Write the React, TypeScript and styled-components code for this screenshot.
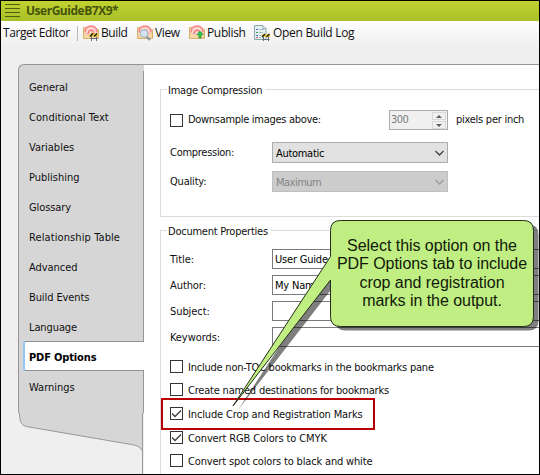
import React from 'react';
import styled, { createGlobalStyle, css } from 'styled-components';

const GlobalStyle = createGlobalStyle`
  *, *::before, *::after { box-sizing: border-box; }
  body { margin: 0; overflow: hidden; }
`;

const uiFont = css`
  font-family: 'DejaVu Sans Condensed', 'DejaVu Sans', sans-serif;
  font-stretch: condensed;
  font-size: 11px;
`;

const Frame = styled.main`
  position: relative;
  display: flex;
  flex-direction: column;
  width: 540px;
  height: 475px;
  overflow: hidden;
  border: 1px solid #000;
  background: #efefef;
  color: #101010;
  white-space: nowrap;
  ${uiFont}
`;

const TitleBar = styled.header`
  display: flex;
  align-items: center;
  flex: none;
  height: 20px;
  padding-left: 4px;
  background: linear-gradient(#c0d331, #a9bf27);
`;

const Title = styled.h1`
  margin: 0 0 0 6px;
  font: bold 12px/20px 'Open Sans', sans-serif;
  letter-spacing: -0.48px;
  color: #46530b;
`;

const Toolbar = styled.nav`
  display: flex;
  align-items: flex-start;
  flex: none;
  height: 43px;
  padding: 3px 0 0 2px;
  background: linear-gradient(#fdfdfd, #efefef 26px);
  font: 12px/18px 'Open Sans', sans-serif;
  color: #111;
`;

const ToolbarHeading = styled.span<{ $tracking: number }>`
  width: 74px;
  letter-spacing: ${(p) => p.$tracking}px;
`;

const Divider = styled.span`
  width: 1px;
  height: 15px;
  margin: 2px 5px 0 0;
  background: #b9b9b9;
`;

const ToolButton = styled.span<{ $width: number; $tracking: number }>`
  display: flex;
  gap: 2px;
  flex: none;
  width: ${(p) => p.$width}px;
  letter-spacing: ${(p) => p.$tracking}px;
  svg { flex: none; margin-top: 1px; }
`;

const Body = styled.div`
  display: flex;
  flex: 1;
  min-height: 0;
  padding-left: 17px;
`;

const Sidebar = styled.aside`
  display: flex;
  flex-direction: column;
  flex: none;
  width: 126px;
`;

const TabList = styled.div`
  height: 349px;
  flex: none;
  padding-top: 6px;
  background: #d6d6d6;
  border: 1px solid #969696;
  border-width: 1px 0 0 1px;
  border-top-left-radius: 6px;
`;

const Tab = styled.div<{ $active?: boolean; $tracking: number }>`
  height: 30px;
  padding: 2px 0 0 10px;
  border-right: 1px solid #969696;
  line-height: 30px;
  letter-spacing: ${(p) => p.$tracking}px;
  ${(p) =>
    p.$active &&
    css`
      margin-left: 4px;
      padding: 1px 0 0 4px;
      background: #fff;
      border: 1px solid #909090;
      border-right: 0;
      border-left: 2px solid #91c5f7;
      border-radius: 3px 0 0 3px;
      font-weight: bold;
      line-height: 30px;
      color: #000;
    `}
`;

const TabEdge = styled.div<{ $height: number }>`
  height: ${(p) => p.$height}px;
  border-right: 1px solid #969696;
`;

const Content = styled.section`
  flex: 1;
  min-width: 0;
  padding: 24px 0 0 16px;
  background: #fff;
  border-top: 1px solid #969696;
`;

const Group = styled.div<{ $height: number }>`
  display: flex;
  flex-direction: column;
  height: ${(p) => p.$height}px;
  margin-bottom: 13px;
  padding-left: 9px;
  border: 1px solid #dcdcdc;
  border-right: 0;
`;

const Legend = styled.h2<{ $tracking: number; $gap: number }>`
  align-self: flex-start;
  flex: none;
  height: 14px;
  margin: -7px 0 ${(p) => p.$gap}px -3px;
  padding: 1px 3px 0 1px;
  background: #fff;
  font: inherit;
  line-height: 14px;
  letter-spacing: ${(p) => p.$tracking}px;
`;

const FormRow = styled.div<{ $height?: number; $gap?: number }>`
  display: flex;
  align-items: center;
  flex: none;
  height: ${(p) => p.$height ?? 20}px;
  margin-bottom: ${(p) => p.$gap ?? 0}px;
`;

const Label = styled.span<{ $tracking?: number; $width?: number; $low?: boolean }>`
  flex: none;
  width: ${(p) => (p.$width ? `${p.$width}px` : 'auto')};
  padding-top: ${(p) => (p.$low ? 2 : 0)}px;
  line-height: 14px;
  letter-spacing: ${(p) => p.$tracking ?? -0.2}px;
`;

const CheckRow = styled.label<{ $height?: number; $marked?: boolean }>`
  position: relative;
  display: flex;
  align-items: center;
  gap: 5px;
  flex: none;
  height: ${(p) => p.$height ?? 23}px;
  ${(p) =>
    p.$marked &&
    css`
      &::after {
        content: '';
        position: absolute;
        left: -9px;
        top: -3px;
        width: 214px;
        height: 32px;
        border: 2px solid #b90000;
      }
    `}
`;

const Box = styled.span`
  display: flex;
  flex: none;
  width: 13px;
  height: 13px;
  border: 1px solid #333;
  background: #fff;
`;

const Select = styled.div<{ $disabled?: boolean }>`
  display: flex;
  align-items: center;
  justify-content: space-between;
  width: 176px;
  height: 21px;
  padding: 0 3px;
  border: 1px solid ${(p) => (p.$disabled ? '#bfbfbf' : '#adadad')};
  background: ${(p) => (p.$disabled ? '#cccccc' : '#e1e1e1')};
  color: ${(p) => (p.$disabled ? '#838383' : '#000')};
  line-height: 14px;
  letter-spacing: ${(p) => (p.$disabled ? -0.5 : -0.3)}px;
`;

const SelectValue = styled.span`
  padding-top: 2px;
`;

const Input = styled.div`
  flex: 1;
  height: 20px;
  padding-left: 2px;
  border: 1px solid #7a7a7a;
  border-right: 0;
  line-height: 20px;
  letter-spacing: -0.2px;
  color: #000;
`;

const Spinner = styled.div`
  display: flex;
  justify-content: space-between;
  width: 59px;
  height: 20px;
  margin: 0 8px 0 68px;
  padding: 0 1px;
  border: 1px solid #ababb3;
  background: #f0f0f0;
  line-height: 17px;
  letter-spacing: -0.5px;
  color: #7d7d7d;
`;

const SpinButtons = styled.span`
  display: grid;
  grid-template-rows: 8px 8px;
  gap: 1px;
  width: 14px;
  padding-top: 1px;
`;

const SpinButton = styled.span`
  display: flex;
  align-items: center;
  justify-content: center;
  border: 1px solid #dadada;
`;

const CalloutLayer = styled.div`
  position: absolute;
  left: -1px;
  top: -1px;
  width: 540px;
  height: 475px;
  svg { display: block; }
`;

const CalloutText = styled.p`
  position: absolute;
  left: 330px;
  top: 220px;
  width: 204px;
  height: 107px;
  margin: 0;
  padding-top: 17px;
  font: 16px/18.3px 'Liberation Sans', Arial, sans-serif;
  letter-spacing: -0.04px;
  text-align: center;
  color: #101a08;
`;

const MenuIcon = () => (
  <svg width="15" height="14" viewBox="0 0 15 14" stroke="#515e12">
    <path d="M0 .5H15M0 4.5H15M0 8.5H15M0 12.5H15" />
  </svg>
);

const Folder = () => (
  <>
    <path d="M.5 2.5H5l1 2h9.5v9H.5Z" fill="#f5dcae" stroke="#d8ae68" />
    <path d="M1.5 5Q2 .5 8 .5T14.5 5V8Q13.5 10 8 10T1.5 8Z" fill="#fbb9b3" />
    <g fill="none" stroke="#ee7475">
      <path d="M2 7Q2 1 8 1T14 7" />
      <path d="M3.7 8Q4 3.2 8 3.2T12.3 8" stroke="#fff0ec" />
      <path d="M5 9Q5 5 8 5T11 9" />
      <path d="M7 9.5Q7 7.3 8 7.3T9 9.5" stroke="#fff0ec" />
    </g>
    <path d="M1 8.5l3 1.5 4-1 4 1 3-1.5v4.5H1Z" fill="#f5d8a6" />
  </>
);

const Barricade = () => (
  <>
    <path d="M8.5 8V16M13.5 8V16M7.5 13.5H14.5" stroke="#626978" />
    <path d="M6.5 8.5H15.5V11.5H6.5Z" fill="#f4d03a" />
    <path d="M7 11.5l3-3M11 11.5l3-3" stroke="#292716" strokeWidth="1.6" />
  </>
);

const BuildIcon = () => (
  <svg width="16" height="17" viewBox="0 0 16 17">
    <Folder />
    <Barricade />
  </svg>
);

const ViewIcon = () => (
  <svg width="16" height="17" viewBox="0 0 16 17">
    <Folder />
    <path d="M9 11l4 4" stroke="#8793a1" strokeWidth="2.2" />
    <circle cx="7" cy="8.5" r="3.8" fill="#d3e3f0" stroke="#a5b5c4" />
  </svg>
);

const PublishIcon = () => (
  <svg width="16" height="17" viewBox="0 0 16 17">
    <Folder />
    <path d="M11 6l3.4 3.6h-2.2V13H9.8V9.6H7.6Z" fill="#2fbd50" stroke="#1c8f3f" strokeWidth=".5" />
  </svg>
);

const LogIcon = () => (
  <svg width="17" height="17" viewBox="0 0 17 17">
    <path d="M.5.5H9l3 3v11H.5Z" fill="#e6eff0" stroke="#8ba8ad" />
    <path d="M9 .5v3h3" fill="#fff" stroke="#8ba8ad" />
    <path d="M5 4.5h5M5 7.5h4M5 10.5h2M5 12.5h2" stroke="#a9bcc0" />
    <path d="M2 4.5h2M2 10.5h2" stroke="#3f72dc" />
    <path d="M2 7.5h2" stroke="#39a251" />
    <path d="M2 12.5h2" stroke="#d45b5b" />
    <path d="M9.5 10v6M14.5 10v6M8.5 14.5h7" stroke="#626978" />
    <path d="M8 9h8v3H8Z" fill="#f4d03a" />
    <path d="M8 12L11 9M12.5 12L15.5 9" stroke="#292716" strokeWidth="1.6" />
  </svg>
);

const CheckMark = () => (
  <svg width="11" height="11" viewBox="0 0 11 11" fill="none" stroke="#3c3c3c" strokeWidth="1.3">
    <path d="M1 5.5L4 8.5L10 2.5" />
  </svg>
);

const Chevron = ({ color }: { color: string }) => (
  <svg width="9" height="6" viewBox="0 0 9 6" fill="none" stroke={color} strokeWidth="1.3">
    <path d="M.5 1L4.5 5L8.5 1" />
  </svg>
);

const Arrow = ({ down }: { down?: boolean }) => (
  <svg width="6" height="3" viewBox="0 0 6 3" fill="#5f5f5f">
    <path d={down ? 'M0 0H6L3 3Z' : 'M0 3H6L3 0Z'} />
  </svg>
);

const SidebarTail = () => (
  <svg width="126" height="62" viewBox="0 0 126 62">
    <path d="M.5 0V2C1 10 3 13 9 14L114 32Q123 33 124.5 38H126V0Z" fill="#d6d6d6" />
    <path d="M.5 0V2C1 10 3 13 9 14L114 32Q123 33 125 38" fill="none" stroke="#969696" />
    <path d="M125.5 0V62" stroke="#969696" />
  </svg>
);

const CalloutShape = () => {
  const outline =
    'M340.5 220.5H523.5Q533.5 220.5 533.5 230.5V316.5Q533.5 326.5 523.5 326.5H340.5Q330.5 326.5 330.5 316.5V280L233 406L330.5 256.5V230.5Q330.5 220.5 340.5 220.5Z';
  return (
    <svg width="540" height="475" viewBox="0 0 540 475">
      <path d={outline} transform="translate(5 4)" fill="#000" fillOpacity=".5" />
      <path d={outline} fill="#c1ee83" stroke="#222d18" strokeLinejoin="bevel" />
    </svg>
  );
};

const tabs: { name: string; tracking: number; active?: boolean }[] = [
  { name: 'General', tracking: -0.05 },
  { name: 'Conditional Text', tracking: 0.05 },
  { name: 'Variables', tracking: 0 },
  { name: 'Publishing', tracking: 0 },
  { name: 'Glossary', tracking: -0.1 },
  { name: 'Relationship Table', tracking: 0.1 },
  { name: 'Advanced', tracking: -0.05 },
  { name: 'Build Events', tracking: -0.1 },
  { name: 'Language', tracking: -0.1 },
  { name: 'PDF Options', tracking: -0.15, active: true },
  { name: 'Warnings', tracking: 0 },
];

const fields = [
  { name: 'Title:', value: 'User Guide' },
  { name: 'Author:', value: 'My Name' },
  { name: 'Subject:', value: '' },
  { name: 'Keywords:', value: '' },
];

const options = [
  { name: 'Include non-TOC bookmarks in the bookmarks pane', tracking: -0.225 },
  { name: 'Create named destinations for bookmarks', tracking: -0.2 },
  { name: 'Include Crop and Registration Marks', tracking: -0.14, checked: true, marked: true, height: 25 },
  { name: 'Convert RGB Colors to CMYK', tracking: -0.12, checked: true },
  { name: 'Convert spot colors to black and white', tracking: -0.17 },
];

export default function App() {
  return (
    <>
      <GlobalStyle />
      <Frame>
        <TitleBar>
          <MenuIcon />
          <Title>UserGuideB7X9*</Title>
        </TitleBar>
        <Toolbar>
          <ToolbarHeading $tracking={-0.43}>Target Editor</ToolbarHeading>
          <Divider />
          <ToolButton $width={54} $tracking={-0.4}><BuildIcon />Build</ToolButton>
          <ToolButton $width={52} $tracking={-0.4}><ViewIcon />View</ToolButton>
          <ToolButton $width={65} $tracking={-0.35}><PublishIcon />Publish</ToolButton>
          <ToolButton $width={110} $tracking={-0.3}><LogIcon />Open Build Log</ToolButton>
        </Toolbar>
        <Body>
          <Sidebar>
            <TabList>
              {tabs.map((t) => (
                <Tab key={t.name} $active={t.active} $tracking={t.tracking}>{t.name}</Tab>
              ))}
              <TabEdge $height={12} />
            </TabList>
            <SidebarTail />
          </Sidebar>
          <Content>
            <Group $height={128}>
              <Legend $tracking={-0.24} $gap={13}>Image Compression</Legend>
              <FormRow $gap={12}>
                <CheckRow>
                  <Box />
                  <Label $tracking={-0.3} $width={133}>Downsample images above:</Label>
                </CheckRow>
                <Spinner>
                  300
                  <SpinButtons>
                    <SpinButton><Arrow /></SpinButton>
                    <SpinButton><Arrow down /></SpinButton>
                  </SpinButtons>
                </Spinner>
                <Label $tracking={-0.26}>pixels per inch</Label>
              </FormRow>
              <FormRow $height={21} $gap={8}>
                <Label $width={102} $tracking={-0.28}>Compression:</Label>
                <Select><SelectValue>Automatic</SelectValue><Chevron color="#444" /></Select>
              </FormRow>
              <FormRow $height={21}>
                <Label $width={102}>Quality:</Label>
                <Select $disabled><SelectValue>Maximum</SelectValue><Chevron color="#9b9b9b" /></Select>
              </FormRow>
            </Group>
            <Group $height={260}>
              <Legend $tracking={-0.24} $gap={11}>Document Properties</Legend>
              {fields.map((f, i) => (
                <FormRow key={f.name} $gap={i < fields.length - 1 ? 6 : 8}>
                  <Label $width={102} $tracking={-0.08} $low>{f.name}</Label>
                  <Input>{f.value}</Input>
                </FormRow>
              ))}
              {options.map((o) => (
                <CheckRow key={o.name} $height={o.height} $marked={o.marked}>
                  <Box>{o.checked && <CheckMark />}</Box>
                  <Label $tracking={o.tracking} $low>{o.name}</Label>
                </CheckRow>
              ))}
            </Group>
          </Content>
        </Body>
        <CalloutLayer>
          <CalloutShape />
          <CalloutText>
            Select this option on the
            <br />
            PDF Options tab to include
            <br />
            crop and registration
            <br />
            marks in the output.
          </CalloutText>
        </CalloutLayer>
      </Frame>
    </>
  );
}
